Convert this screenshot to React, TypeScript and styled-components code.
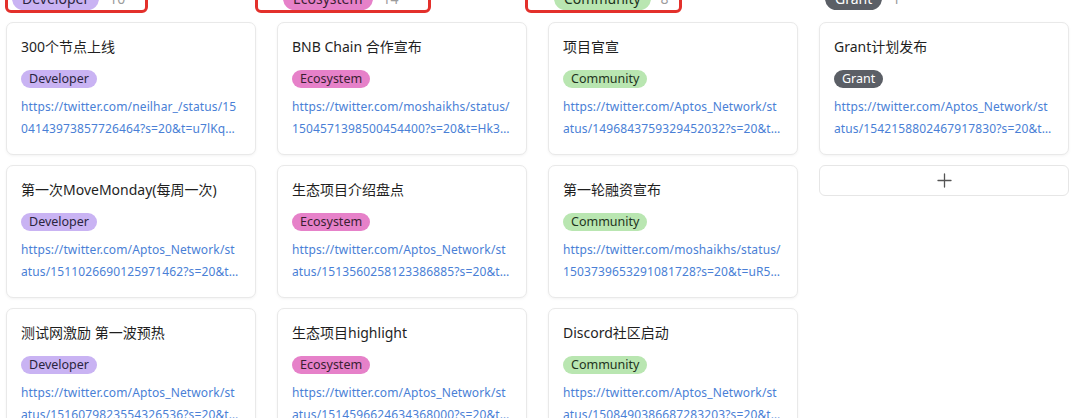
import React from "react";
import styled, {createGlobalStyle} from "styled-components";

const GlobalStyle = createGlobalStyle`
html, body {
    margin: 0;
    padding: 0;
    background: #ffffff;
}
body {
    font-family: "Noto Sans", "Noto Sans CJK SC", sans-serif;
    color: #1f1f1f;
}
`

type TagKind = "developer" | "ecosystem" | "community" | "grant";

const tagColors: Record<TagKind, { bg: string, fg: string }> = {
    developer: {bg: "#c9b3f3", fg: "#2b2540"},
    ecosystem: {bg: "#e681c9", fg: "#3a1f33"},
    community: {bg: "#b9e6b1", fg: "#1f3320"},
    grant: {bg: "#5b5f66", fg: "#ffffff"},
}

const Page = styled.div`
    width: 1080px;
    height: 418px;
    overflow: hidden;
    position: relative;
`
const Board = styled.div`
    display: flex;
    gap: 21px;
    padding-left: 6px;
    margin-top: -13px;
    position: relative;
`
const Column = styled.div`
    width: 250px;
    display: flex;
    flex-direction: column;
    gap: 10px;
    flex-shrink: 0;
`
const ColumnHeader = styled.div`
    display: flex;
    align-items: center;
    gap: 10px;
    padding-left: 6px;
    height: 23px;
    margin-bottom: 2px;
`
const HeaderBadge = styled.span<{ $kind: TagKind }>`
    background: ${p => tagColors[p.$kind].bg};
    color: ${p => tagColors[p.$kind].fg};
    font-size: 14px;
    line-height: 23px;
    padding: 0 10px;
    border-radius: 12px;
`
const Count = styled.span`
    color: #9c9c9c;
    font-size: 14px;
`
const Card = styled.div`
    background: #fff;
    border: 1px solid #e9e9e9;
    border-radius: 7px;
    box-shadow: 0 1px 3px rgba(0, 0, 0, 0.05);
    padding: 13px 14px 14px 14px;
    display: flex;
    flex-direction: column;
    align-items: flex-start;
`
const Title = styled.div`
    font-size: 14px;
    line-height: 22px;
    color: #1f1f1f;
`
const Tag = styled.span<{ $kind: TagKind }>`
    margin-top: 12px;
    background: ${p => tagColors[p.$kind].bg};
    color: ${p => tagColors[p.$kind].fg};
    font-size: 12.5px;
    line-height: 18px;
    height: 18px;
    padding: 0 8px;
    border-radius: 9px;
`
const LinkText = styled.a`
    margin-top: 8px;
    font-size: 12px;
    letter-spacing: 0.13px;
    line-height: 22px;
    color: #4a7fd6;
    text-decoration: none;
    word-break: break-all;
    display: -webkit-box;
    -webkit-line-clamp: 2;
    -webkit-box-orient: vertical;
    overflow: hidden;
`
const AddButton = styled.button`
    height: 31px;
    background: #fff;
    border: 1px solid #e6e6e6;
    border-radius: 6px;
    display: flex;
    align-items: center;
    justify-content: center;
    color: #555;
    cursor: pointer;
    padding: 0;
`
const Highlight = styled.div<{ $left: number, $width: number }>`
    position: absolute;
    top: -30px;
    left: ${p => p.$left}px;
    width: ${p => p.$width}px;
    height: 56px;
    box-sizing: border-box;
    border: 3px solid #e3302b;
    border-radius: 6px;
    pointer-events: none;
`

type Item = { title: string, url: string }
type Col = { kind: TagKind, label: string, count: number, items: Item[], add?: boolean }

const columns: Col[] = [
    {
        kind: "developer", label: "Developer", count: 10, items: [
            {title: "300个节点上线", url: "https://twitter.com/neilhar_/status/1504143973857726464?s=20&t=u7lKq2Xv9pLmR3bT"},
            {title: "第一次MoveMonday(每周一次)", url: "https://twitter.com/Aptos_Network/status/1511026690125971462?s=20&t=Qw8e"},
            {title: "测试网激励 第一波预热", url: "https://twitter.com/Aptos_Network/status/1516079823554326536?s=20&t=Zp1a"},
        ]
    },
    {
        kind: "ecosystem", label: "Ecosystem", count: 14, items: [
            {title: "BNB Chain 合作宣布", url: "https://twitter.com/moshaikhs/status/1504571398500454400?s=20&t=Hk3mV7"},
            {title: "生态项目介绍盘点", url: "https://twitter.com/Aptos_Network/status/1513560258123386885?s=20&t=Bn4r"},
            {title: "生态项目highlight", url: "https://twitter.com/Aptos_Network/status/1514596624634368000?s=20&t=Lc2d"},
        ]
    },
    {
        kind: "community", label: "Community", count: 8, items: [
            {title: "项目官宣", url: "https://twitter.com/Aptos_Network/status/1496843759329452032?s=20&t=Yt6g"},
            {title: "第一轮融资宣布", url: "https://twitter.com/moshaikhs/status/1503739653291081728?s=20&t=uR5sW2"},
            {title: "Discord社区启动", url: "https://twitter.com/Aptos_Network/status/1508490386687283203?s=20&t=Mx7k"},
        ]
    },
    {
        kind: "grant", label: "Grant", count: 1, add: true, items: [
            {title: "Grant计划发布", url: "https://twitter.com/Aptos_Network/status/1542158802467917830?s=20&t=Gv9h"},
        ]
    },
]

const PlusIcon = () => (
    <svg width="15" height="15" viewBox="0 0 15 15" fill="none">
        <path d="M7.5 1v13M1 7.5h13" stroke="#555" strokeWidth="1.3" strokeLinecap="round"/>
    </svg>
)

const App = () => {
    return (<Page>
        <GlobalStyle/>
        <Board>
            {columns.map(col => (
                <Column key={col.label}>
                    <ColumnHeader>
                        <HeaderBadge $kind={col.kind}>{col.label}</HeaderBadge>
                        <Count>{col.count}</Count>
                    </ColumnHeader>
                    {col.items.map(item => (
                        <Card key={item.title}>
                            <Title>{item.title}</Title>
                            <Tag $kind={col.kind}>{col.label}</Tag>
                            <LinkText href={item.url}>{item.url}</LinkText>
                        </Card>
                    ))}
                    {col.add && <AddButton><PlusIcon/></AddButton>}
                </Column>
            ))}
            <Highlight $left={5} $width={143}/>
            <Highlight $left={255} $width={176}/>
            <Highlight $left={525} $width={157}/>
        </Board>
    </Page>)
}

export default App
